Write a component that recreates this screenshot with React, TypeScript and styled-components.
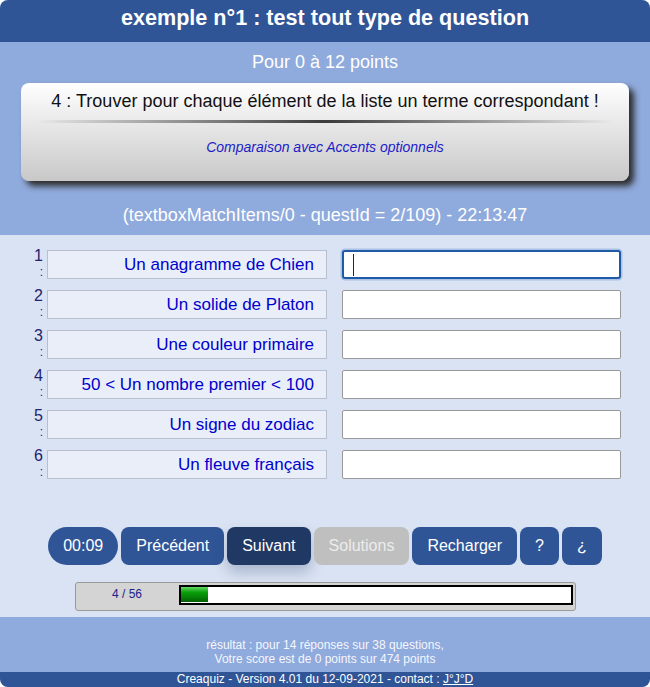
import React from "react";
import styled, { createGlobalStyle, css } from "styled-components";

const Global = createGlobalStyle`
  html, body { margin: 0; padding: 0; background: #ffffff; }
  body { font-family: "Liberation Sans", Arial, Helvetica, sans-serif; }
  *, *::before, *::after { box-sizing: border-box; }
`;

const Page = styled.div`
  width: 650px;
  height: 687px;
  border-radius: 8px;
  overflow: hidden;
  display: flex;
  flex-direction: column;
  background: #dae3f3;
`;

const Header = styled.header`
  height: 42px;
  padding-top: 5px;
  background: #2f5597;
  color: #ffffff;
  text-align: center;
`;

const Title = styled.h1`
  margin: 0;
  font-size: 21.6px;
  font-weight: bold;
  line-height: 26px;
`;

const QuestionZone = styled.section`
  background: #8faadc;
  padding: 9px 0 9px;
  text-align: center;
`;

const Points = styled.div`
  color: #ffffff;
  font-size: 18px;
  line-height: 23px;
`;

const Card = styled.div`
  margin: 9px 21px 0;
  padding: 8px 0 26px;
  border-radius: 8px;
  background: linear-gradient(to bottom, #ffffff 0%, #c8c8c8 100%);
  box-shadow: 5px 5px 6px #2c2c2c;
`;

const CardTitle = styled.div`
  color: #111111;
  font-size: 18px;
  line-height: 21px;
`;

const Rule = styled.div`
  height: 3px;
  margin: 8px 15px 0;
  background: linear-gradient(
    to right,
    rgba(0, 0, 0, 0),
    rgba(0, 0, 0, 0.75),
    rgba(0, 0, 0, 0)
  );
`;

const Mode = styled.div`
  margin-top: 16px;
  color: #1c1cc8;
  font-size: 14px;
  font-style: italic;
  line-height: 16px;
`;

const Debug = styled.div`
  margin-top: 24px;
  color: #ffffff;
  font-size: 18px;
  line-height: 21px;
`;

const AnswerZone = styled.section`
  flex: 1;
  padding: 15px 29px 6px;
  display: flex;
  flex-direction: column;
`;

const Rows = styled.div`
  display: flex;
  flex-direction: column;
  gap: 11px;
`;

const Row = styled.div`
  display: flex;
  align-items: flex-start;
  height: 29px;
`;

const Num = styled.div`
  width: 14px;
  margin: -2px 4px 0 0;
  display: flex;
  flex-direction: column;
  align-items: flex-end;
  color: #22226e;
`;

const Digit = styled.span`
  font-size: 16px;
  line-height: 15px;
`;

const Colon = styled.span`
  font-size: 12px;
  line-height: 19px;
`;

const Label = styled.div`
  width: 280px;
  height: 29px;
  padding-right: 12px;
  display: flex;
  align-items: center;
  justify-content: flex-end;
  background: #e9eef9;
  border: 1px solid #b8bfcf;
  color: #0000cd;
  font-size: 17px;
  white-space: nowrap;
`;

const TextBox = styled.div<{ $focused?: boolean }>`
  flex: 1;
  height: 29px;
  margin-left: 15px;
  padding-left: 10px;
  display: flex;
  align-items: center;
  background: #ffffff;
  border: 1px solid #999999;
  border-radius: 2px;
  ${(p) =>
    p.$focused &&
    css`
      padding-left: 9px;
      border: 2px solid #1f5aa6;
      border-radius: 3px;
      box-shadow: 0 0 0 1.5px #a9c2e6;
    `}
`;

const Caret = styled.span`
  width: 1px;
  height: 22px;
  background: #1a1a80;
`;

const Toolbar = styled.div`
  margin-top: 48px;
  display: flex;
  justify-content: center;
  gap: 3px;
`;

type Variant = "pill" | "normal" | "active" | "disabled";

const Button = styled.button<{ $variant?: Variant }>`
  height: 38px;
  padding: 0 15px;
  border: 0;
  border-radius: 8px;
  background: #2f5597;
  color: #ffffff;
  font-family: "Liberation Sans", Arial, sans-serif;
  font-size: 16px;
  cursor: pointer;
  ${(p) =>
    p.$variant === "pill" &&
    css`
      border-radius: 19px;
    `}
  ${(p) =>
    p.$variant === "active" &&
    css`
      background: #203864;
      box-shadow: 0 7px 14px rgba(32, 56, 100, 0.28);
    `}
  ${(p) =>
    p.$variant === "disabled" &&
    css`
      background: #bfbfbf;
      color: #ececec;
      cursor: default;
    `}
`;

const Progress = styled.div`
  width: 501px;
  height: 29px;
  margin: 17px auto 0;
  padding: 1.5px 2px 0 0;
  display: flex;
  align-items: flex-start;
  background: #d4d4d4;
  border: 1px solid #9a9a9a;
  border-radius: 3px;
`;

const ProgressLabel = styled.div`
  width: 103px;
  text-align: center;
  color: #22228a;
  font-size: 12px;
  line-height: 19px;
`;

const Bar = styled.div`
  width: 394px;
  height: 20px;
  border: 2px solid #000000;
  background: #ffffff;
`;

const Fill = styled.div`
  height: 15px;
  background: linear-gradient(
    to bottom,
    #66d866 0%,
    #0aa00a 35%,
    #058005 70%,
    #045c04 100%
  );
`;

const Result = styled.footer`
  height: 55px;
  padding-top: 21px;
  background: #8faadc;
  color: #f5f7fc;
  font-size: 12px;
  line-height: 14px;
  text-align: center;
`;

const Credits = styled.div`
  height: 15px;
  background: #2f5597;
  color: #ffffff;
  font-size: 12px;
  line-height: 15px;
  text-align: center;
`;

const Contact = styled.a`
  color: #ffffff;
  text-decoration: underline;
`;

const items = [
  "Un anagramme de Chien",
  "Un solide de Platon",
  "Une couleur primaire",
  "50 < Un nombre premier < 100",
  "Un signe du zodiac",
  "Un fleuve français",
];

const buttons: { label: string; variant: Variant }[] = [
  { label: "00:09", variant: "pill" },
  { label: "Précédent", variant: "normal" },
  { label: "Suivant", variant: "active" },
  { label: "Solutions", variant: "disabled" },
  { label: "Recharger", variant: "normal" },
  { label: "?", variant: "normal" },
  { label: "¿", variant: "normal" },
];

export default function App() {
  const done = 4;
  const total = 56;
  return (
    <>
      <Global />
      <Page>
        <Header>
          <Title>exemple n°1 : test tout type de question</Title>
        </Header>
        <QuestionZone>
          <Points>Pour 0 à 12 points</Points>
          <Card>
            <CardTitle>
              4 : Trouver pour chaque élément de la liste un terme correspondant !
            </CardTitle>
            <Rule />
            <Mode>Comparaison avec Accents optionnels</Mode>
          </Card>
          <Debug>(textboxMatchItems/0 - questId = 2/109) - 22:13:47</Debug>
        </QuestionZone>
        <AnswerZone>
          <Rows>
            {items.map((item, i) => (
              <Row key={item}>
                <Num>
                  <Digit>{i + 1}</Digit>
                  <Colon>:</Colon>
                </Num>
                <Label>{item}</Label>
                <TextBox role="textbox" $focused={i === 0}>
                  {i === 0 && <Caret />}
                </TextBox>
              </Row>
            ))}
          </Rows>
          <Toolbar>
            {buttons.map((b) => (
              <Button key={b.label} $variant={b.variant} disabled={b.variant === "disabled"}>
                {b.label}
              </Button>
            ))}
          </Toolbar>
          <Progress>
            <ProgressLabel>
              {done} / {total}
            </ProgressLabel>
            <Bar>
              <Fill style={{ width: `${(done / total) * 100}%` }} />
            </Bar>
          </Progress>
        </AnswerZone>
        <Result>
          résultat : pour 14 réponses sur 38 questions,
          <br />
          Votre score est de 0 points sur 474 points
        </Result>
        <Credits>
          Creaquiz - Version 4.01 du 12-09-2021 - contact : <Contact href="#">J°J°D</Contact>
        </Credits>
      </Page>
    </>
  );
}
